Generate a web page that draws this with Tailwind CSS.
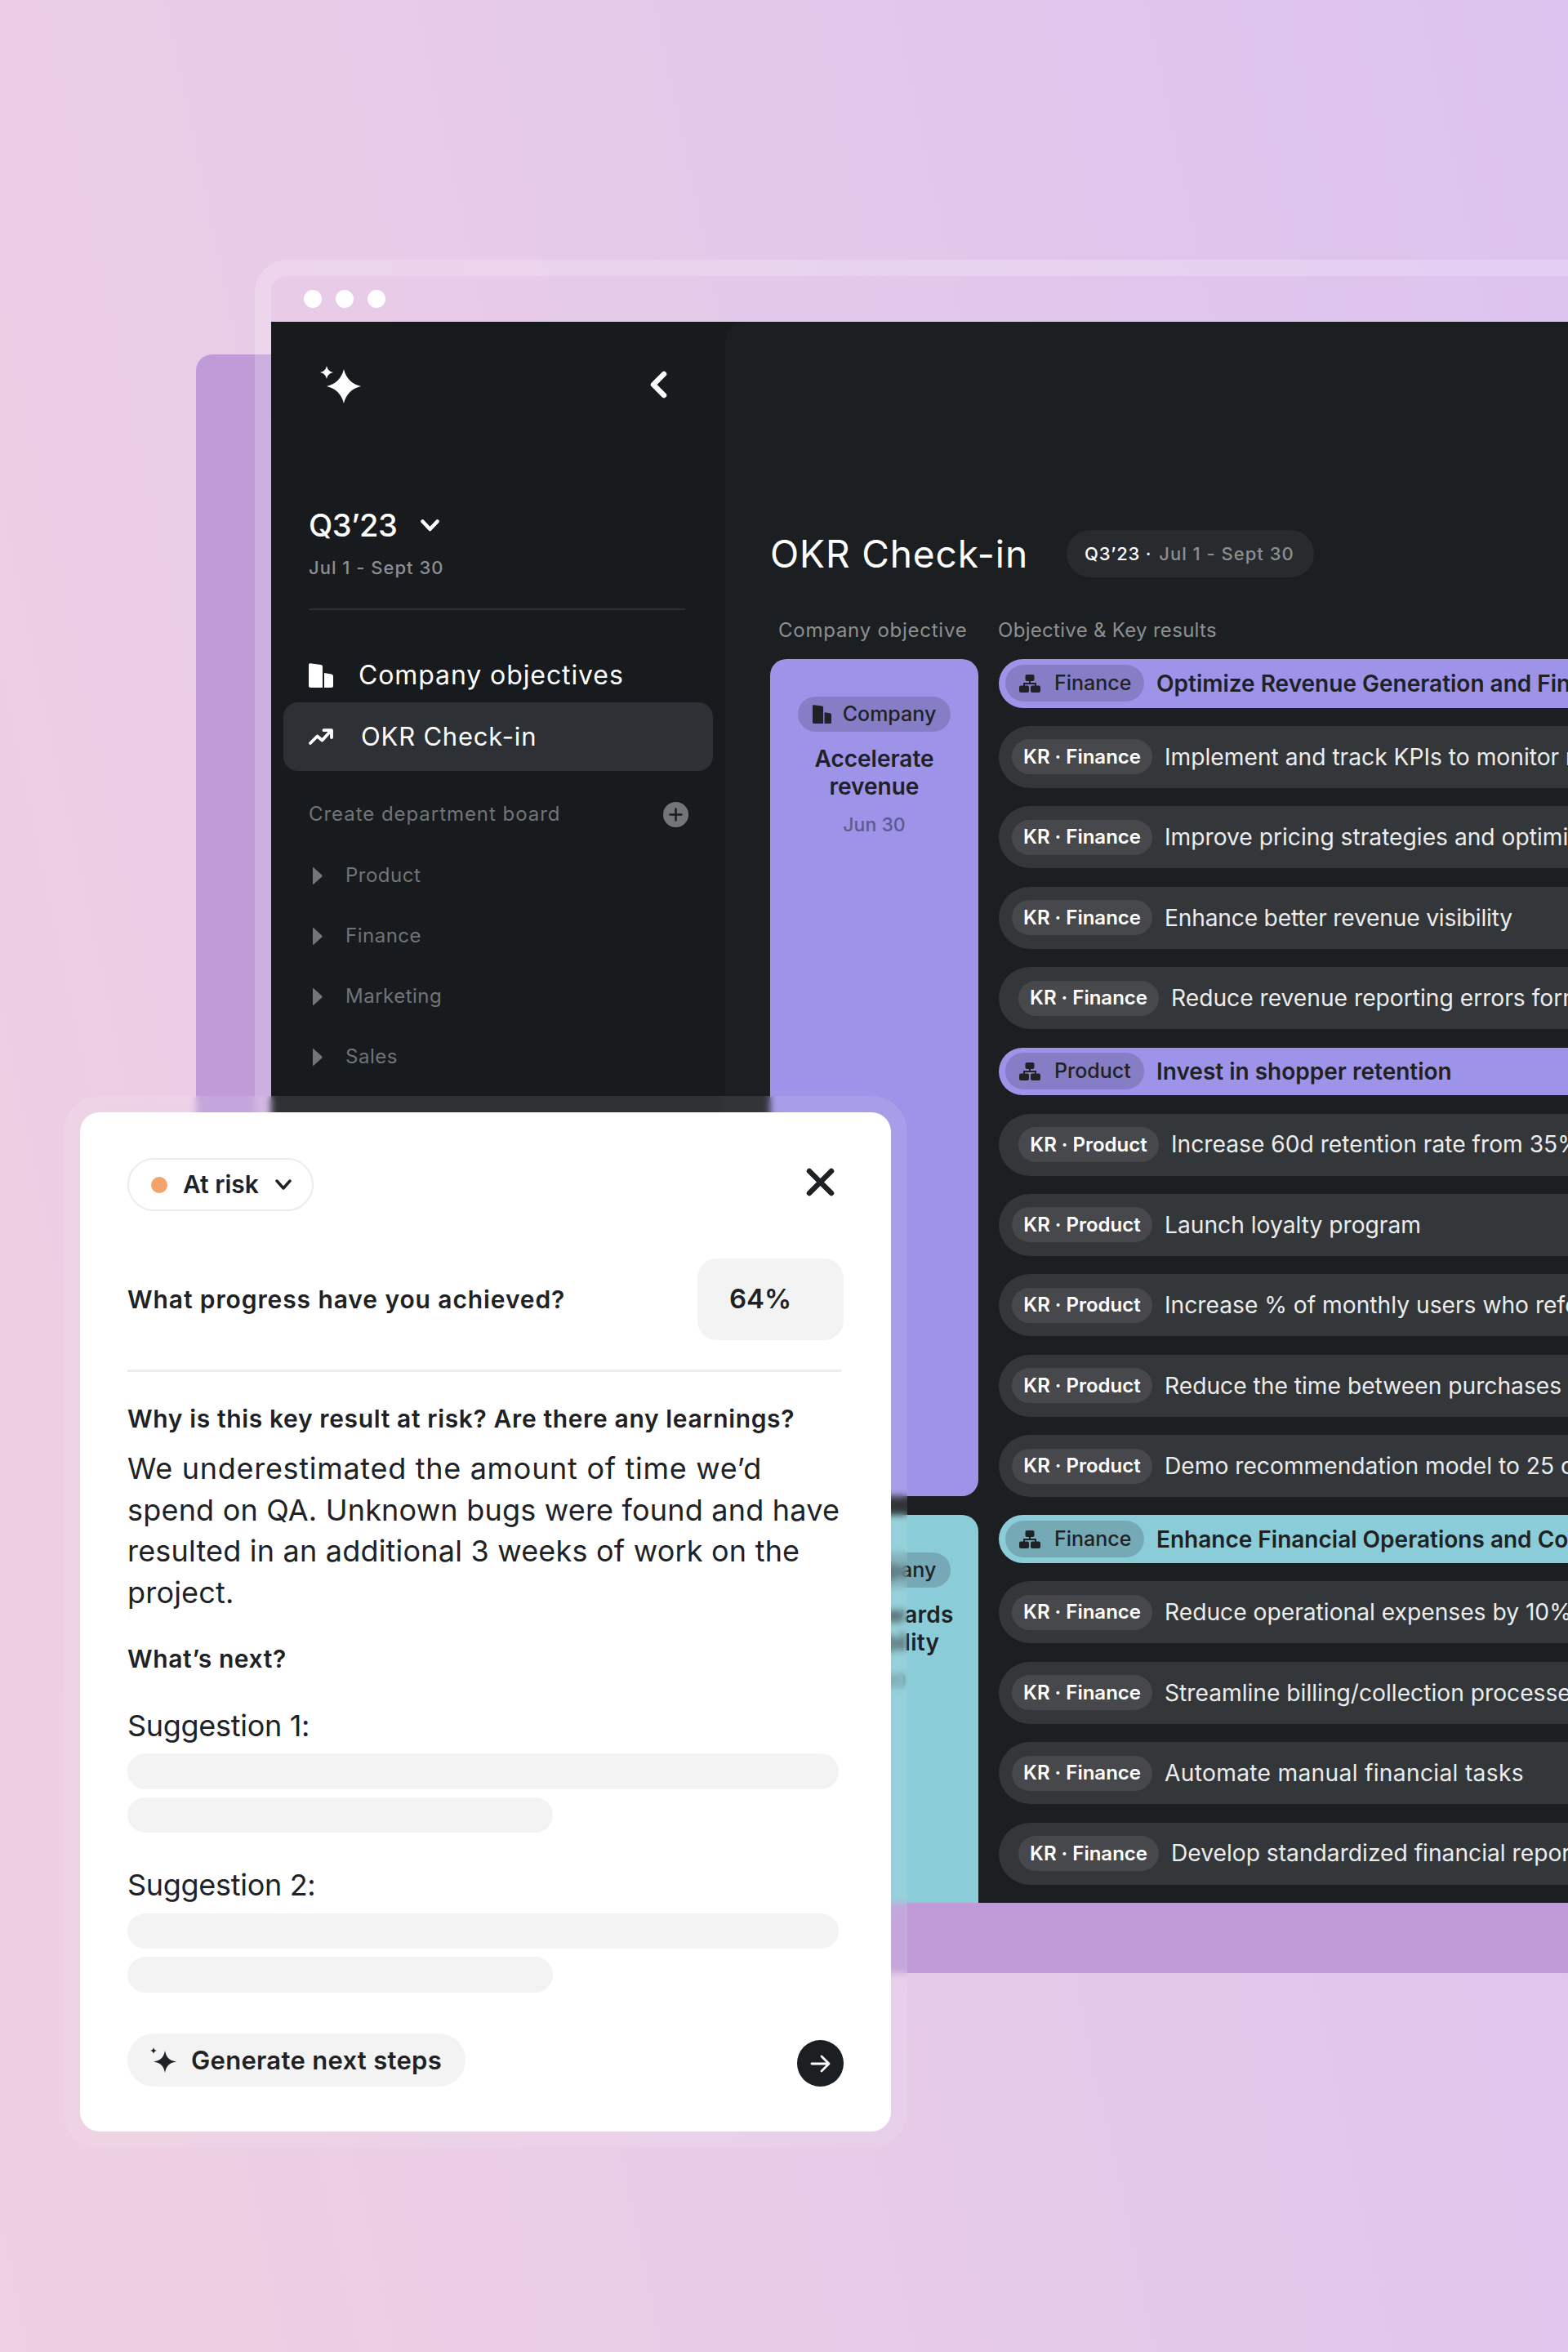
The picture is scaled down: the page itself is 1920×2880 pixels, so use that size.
<!DOCTYPE html>
<html lang="en">
<head>
    <meta charset="UTF-8">
    <title>OKR Check-in</title>
    <script src="https://cdn.jsdelivr.net/npm/@tailwindcss/browser@4"></script>
</head>
<body class="font-[family-name:Inter,sans-serif]">
<div class="relative w-[1920px] h-[2880px] overflow-hidden bg-linear-78 from-[#efd0e2] to-[#dcc3ef]">

    <!-- purple sheet behind the window -->
    <div class="absolute left-[240px] top-[434px] right-0 h-[1982px] rounded-tl-[20px] bg-[#bf9cd8]"></div>

    <!-- browser window -->
    <div class="absolute left-[312px] top-[318px] right-0 h-[2012px] flex flex-col overflow-hidden rounded-tl-[40px] border-l-[20px] border-t-[20px] border-white/20">
        <div class="h-[56px] shrink-0 flex items-center gap-[17px] pl-[40px]">
            <span class="w-[22px] h-[22px] rounded-full bg-white"></span>
            <span class="w-[22px] h-[22px] rounded-full bg-white"></span>
            <span class="w-[22px] h-[22px] rounded-full bg-white"></span>
        </div>

        <div class="flex-1 flex min-h-0 bg-[#171b1e]">
            <!-- sidebar -->
            <aside class="w-[556px] shrink-0 flex flex-col pl-[46px] pr-[49px]">
                <div class="mt-[54px] h-[46px] flex items-center justify-between">
                    <svg class="ml-[14px]" width="50" height="46" viewBox="0 0 50 46" fill="#fff">
                        <path d="M29 4C31.5 15 39 22.5 50 25C39 27.5 31.5 35 29 46C26.500 35 19 27.500 8 25C19 22.5 26.500 15 29 4Z"/>
                        <path d="M8 0C9 4.500 11.500 7 16 8C11.500 9 9 11.500 8 16C7 11.500 4.500 9 0 8C4.500 7 7 4.500 8 0Z"/>
                    </svg>
                    <svg class="mr-[22px]" width="22" height="34" viewBox="0 0 22 34" fill="none" stroke="#fff" stroke-width="6.500" stroke-linecap="round" stroke-linejoin="round"><path d="M18 4L5 17L18 30"/></svg>
                </div>

                <div class="mt-[127px] h-[44px] flex items-center">
                    <span class="text-[38px] font-medium text-white tracking-[-0.5px]">Q3’23</span>
                    <svg class="ml-[29px]" width="23" height="15" viewBox="0 0 23 15" fill="none" stroke="#fff" stroke-width="4.500" stroke-linecap="round" stroke-linejoin="round"><path d="M2.500 2.500L11.500 12L20.500 2.500"/></svg>
                </div>
                <div class="mt-[15px] h-[30px] flex items-center text-[22px] font-medium tracking-[1px] text-[#8c8f91]">Jul 1 - Sept 30</div>
                <div class="mt-[35px] h-[2px] bg-[#2c3033]"></div>

                <div class="mt-[60px] h-[40px] flex items-center gap-[31px] text-[32px] tracking-[0.9px] text-white">
                    <svg width="30" height="30" viewBox="0 0 30 30" fill="#fff" class="shrink-0">
                        <path d="M0 2Q0 0 2 .2L15 2Q17 2.300 17 4V30H2Q0 30 0 28Z"/>
                        <path d="M19 12L28 13.500Q30 14 30 16V28Q30 30 28 30H19Z"/>
                    </svg>
                    <span>Company objectives</span>
                </div>

                <div class="mt-[13px] -ml-[31px] w-[526px] h-[84px] flex items-center gap-[34px] pl-[31px] rounded-[18px] bg-[#2d3135] text-[31px] tracking-[0.8px] text-white">
                    <svg width="30" height="20" viewBox="0 0 30 20" fill="none" stroke="#fff" stroke-width="3.800" stroke-linecap="round" stroke-linejoin="round" class="shrink-0">
                        <path d="M2 18L10.500 9.500L16.500 14.500L27 3"/><path d="M18.500 2.200H28V11"/>
                    </svg>
                    <span>OKR Check-in</span>
                </div>

                <div class="mt-[37px] -mr-[4px] h-[32px] flex items-center justify-between text-[24px] tracking-[0.95px] text-[#717477]">
                    <span>Create department board</span>
                    <span class="w-[31px] h-[31px] rounded-full bg-[#737678] flex items-center justify-center">
                        <svg width="17" height="17" viewBox="0 0 17 17" fill="none" stroke="#171b1e" stroke-width="2.400" stroke-linecap="round"><path d="M8.500 1.500V15.500M1.500 8.500H15.500"/></svg>
                    </span>
                </div>

                <div class="mt-[44px] flex flex-col gap-[44px] text-[24px] tracking-[0.5px] text-[#717477]">
                    <div class="h-[30px] flex items-center gap-[28px] pl-[4px]">
                        <svg width="13" height="23" viewBox="0 0 13 23" fill="#737678"><path d="M1 1.500Q1 .5 2 1.200L12.200 10.500Q13 11.500 12.200 12.500L2 21.800Q1 22.500 1 21.500Z"/></svg>
                        <span>Product</span>
                    </div>
                    <div class="h-[30px] flex items-center gap-[28px] pl-[4px]">
                        <svg width="13" height="23" viewBox="0 0 13 23" fill="#737678"><path d="M1 1.500Q1 .5 2 1.200L12.200 10.500Q13 11.500 12.200 12.500L2 21.800Q1 22.500 1 21.500Z"/></svg>
                        <span>Finance</span>
                    </div>
                    <div class="h-[30px] flex items-center gap-[28px] pl-[4px]">
                        <svg width="13" height="23" viewBox="0 0 13 23" fill="#737678"><path d="M1 1.500Q1 .5 2 1.200L12.200 10.500Q13 11.500 12.200 12.500L2 21.800Q1 22.500 1 21.500Z"/></svg>
                        <span>Marketing</span>
                    </div>
                    <div class="h-[30px] flex items-center gap-[28px] pl-[4px]">
                        <svg width="13" height="23" viewBox="0 0 13 23" fill="#737678"><path d="M1 1.500Q1 .5 2 1.200L12.200 10.500Q13 11.500 12.200 12.500L2 21.800Q1 22.500 1 21.500Z"/></svg>
                        <span>Sales</span>
                    </div>
                </div>
            </aside>

            <!-- main -->
            <main class="flex-1 min-w-0 overflow-hidden rounded-tl-[24px] bg-[#1b1f22] pl-[55px]">
                <div class="mt-[255px] h-[58px] flex items-center gap-[47px]">
                    <h1 class="text-[46px] font-normal tracking-[0.9px] text-white whitespace-nowrap">OKR Check-in</h1>
                    <div class="h-[58px] w-[303px] flex items-center pl-[22px] rounded-full bg-[#272b2e] text-[22px] font-medium whitespace-nowrap">
                        <span class="tracking-[0.8px] text-white">Q3’23 ·</span><span class="ml-[9px] tracking-[1px] text-[#8c8f91]">Jul 1 - Sept 30</span>
                    </div>
                </div>

                <div class="mt-[50px] h-[30px] flex items-center text-[24px] text-[#8d9091] whitespace-nowrap">
                    <span class="ml-[10px] w-[269px] tracking-[0.75px]">Company objective</span>
                    <span class="tracking-[0.3px]">Objective &amp; Key results</span>
                </div>

                <div class="mt-[20px] flex gap-[25px]">
                    <!-- company objective column -->
                    <div class="w-[255px] shrink-0 flex flex-col gap-[23px]">
                        <div class="h-[1025px] flex flex-col items-center rounded-[20px] bg-[#9d93e8] pt-[46px] text-[#1e2224]">
                            <div class="w-[187px] h-[43px] flex items-center justify-center gap-[14px] rounded-full bg-[#857dc5] text-[25px] font-medium">
                                <svg width="23" height="23" viewBox="0 0 30 30" fill="#1e2224" class="shrink-0">
                                    <path d="M0 2Q0 0 2 .2L15 2Q17 2.300 17 4V30H2Q0 30 0 28Z"/><path d="M19 12L28 13.500Q30 14 30 16V28Q30 30 28 30H19Z"/>
                                </svg>
                                <span>Company</span>
                            </div>
                            <div class="mt-[16px] text-center text-[28px] leading-[34px] font-semibold">Accelerate<br>revenue</div>
                            <div class="mt-[13px] text-[23px] font-medium text-[#5d5a8f]">Jun 30</div>
                        </div>
                        <div class="h-[475px] flex flex-col items-center rounded-t-[20px] bg-[#8accd7] pt-[46px] text-[#1e2224]">
                            <div class="w-[187px] h-[43px] flex items-center justify-center gap-[14px] rounded-full bg-[#74a9b5] text-[25px] font-medium">
                                <svg width="23" height="23" viewBox="0 0 30 30" fill="#1e2224" class="shrink-0">
                                    <path d="M0 2Q0 0 2 .2L15 2Q17 2.300 17 4V30H2Q0 30 0 28Z"/><path d="M19 12L28 13.500Q30 14 30 16V28Q30 30 28 30H19Z"/>
                                </svg>
                                <span>Company</span>
                            </div>
                            <div class="mt-[16px] text-center text-[28px] leading-[34px] font-semibold tracking-[0.3px]">Move towards<br>profitability</div>
                            <div class="mt-[13px] text-[23px] font-medium text-[#4e7480]">Sep 30</div>
                        </div>
                    </div>

                    <!-- objective and key result rows -->
                    <div class="flex-1 min-w-0 flex flex-col gap-[22.4px] whitespace-nowrap">
                        <div class="h-[59.6px] shrink-0 flex items-center gap-[15px] pl-[8px] rounded-l-full bg-[#9d93e8] text-[#1e2224]">
                            <div class="w-[170px] h-[45px] shrink-0 flex items-center gap-[17px] pl-[17px] rounded-full bg-[#857dc5] text-[25px] font-medium">
                                <svg width="26" height="22" viewBox="0 0 26 22" fill="#1e2224" class="shrink-0"><rect x="7.500" width="11" height="8" rx="2"/><rect y="13.500" width="12" height="8.500" rx="2"/><rect x="14" y="13.500" width="12" height="8.500" rx="2"/><path d="M13 7v4M6 15v-4h14v4" fill="none" stroke="#1e2224" stroke-width="2"/></svg>
                                <span>Finance</span>
                            </div>
                            <span class="text-[28px] font-semibold">Optimize Revenue Generation and Financial Performance</span>
                        </div>

                        <div class="h-[76px] shrink-0 flex items-center gap-[15px] pl-[16px] rounded-l-full bg-[#33373a] text-[28.2px] text-[#ececec]"><span class="w-[172px] h-[43px] shrink-0 flex items-center justify-center rounded-full bg-[#46484c] text-[24px] font-semibold text-white">KR · Finance</span><span>Implement and track KPIs to monitor revenue performance</span></div>
                        <div class="h-[76px] shrink-0 flex items-center gap-[15px] pl-[16px] rounded-l-full bg-[#33373a] text-[28.2px] text-[#ececec]"><span class="w-[172px] h-[43px] shrink-0 flex items-center justify-center rounded-full bg-[#46484c] text-[24px] font-semibold text-white">KR · Finance</span><span>Improve pricing strategies and optimize revenue streams</span></div>
                        <div class="h-[76px] shrink-0 flex items-center gap-[15px] pl-[16px] rounded-l-full bg-[#33373a] text-[28.2px] text-[#ececec]"><span class="w-[172px] h-[43px] shrink-0 flex items-center justify-center rounded-full bg-[#46484c] text-[24px] font-semibold text-white">KR · Finance</span><span class="tracking-[-0.2px]">Enhance better revenue visibility</span></div>
                        <div class="h-[76px] shrink-0 flex items-center gap-[15px] pl-[24px] rounded-l-full bg-[#33373a] text-[28.2px] text-[#ececec]"><span class="w-[172px] h-[43px] shrink-0 flex items-center justify-center rounded-full bg-[#46484c] text-[24px] font-semibold text-white">KR · Finance</span><span>Reduce revenue reporting errors form 5% to 1%</span></div>

                        <div class="h-[58.6px] shrink-0 flex items-center gap-[15px] pl-[8px] rounded-l-full bg-[#9d93e8] text-[#1e2224]">
                            <div class="w-[170px] h-[45px] shrink-0 flex items-center gap-[17px] pl-[17px] rounded-full bg-[#857dc5] text-[25px] font-medium">
                                <svg width="26" height="22" viewBox="0 0 26 22" fill="#1e2224" class="shrink-0"><rect x="7.500" width="11" height="8" rx="2"/><rect y="13.500" width="12" height="8.500" rx="2"/><rect x="14" y="13.500" width="12" height="8.500" rx="2"/><path d="M13 7v4M6 15v-4h14v4" fill="none" stroke="#1e2224" stroke-width="2"/></svg>
                                <span>Product</span>
                            </div>
                            <span class="text-[28px] font-semibold">Invest in shopper retention</span>
                        </div>

                        <div class="h-[76px] shrink-0 flex items-center gap-[15px] pl-[24px] rounded-l-full bg-[#33373a] text-[28.2px] text-[#ececec]"><span class="w-[172px] h-[43px] shrink-0 flex items-center justify-center rounded-full bg-[#46484c] text-[24px] font-semibold text-white">KR · Product</span><span>Increase 60d retention rate from 35% to 50%</span></div>
                        <div class="h-[76px] shrink-0 flex items-center gap-[15px] pl-[16px] rounded-l-full bg-[#33373a] text-[28.2px] text-[#ececec]"><span class="w-[172px] h-[43px] shrink-0 flex items-center justify-center rounded-full bg-[#46484c] text-[24px] font-semibold text-white">KR · Product</span><span>Launch loyalty program</span></div>
                        <div class="h-[76px] shrink-0 flex items-center gap-[15px] pl-[16px] rounded-l-full bg-[#33373a] text-[28.2px] text-[#ececec]"><span class="w-[172px] h-[43px] shrink-0 flex items-center justify-center rounded-full bg-[#46484c] text-[24px] font-semibold text-white">KR · Product</span><span>Increase % of monthly users who refer a friend</span></div>
                        <div class="h-[76px] shrink-0 flex items-center gap-[15px] pl-[16px] rounded-l-full bg-[#33373a] text-[28.2px] text-[#ececec]"><span class="w-[172px] h-[43px] shrink-0 flex items-center justify-center rounded-full bg-[#46484c] text-[24px] font-semibold text-white">KR · Product</span><span>Reduce the time between purchases by 10%</span></div>
                        <div class="h-[76px] shrink-0 flex items-center gap-[15px] pl-[16px] rounded-l-full bg-[#33373a] text-[28.2px] text-[#ececec]"><span class="w-[172px] h-[43px] shrink-0 flex items-center justify-center rounded-full bg-[#46484c] text-[24px] font-semibold text-white">KR · Product</span><span>Demo recommendation model to 25 customers</span></div>

                        <div class="h-[58.6px] shrink-0 flex items-center gap-[15px] pl-[8px] rounded-l-full bg-[#8accd7] text-[#1e2224]">
                            <div class="w-[170px] h-[45px] shrink-0 flex items-center gap-[17px] pl-[17px] rounded-full bg-[#74a9b5] text-[25px] font-medium">
                                <svg width="26" height="22" viewBox="0 0 26 22" fill="#1e2224" class="shrink-0"><rect x="7.500" width="11" height="8" rx="2"/><rect y="13.500" width="12" height="8.500" rx="2"/><rect x="14" y="13.500" width="12" height="8.500" rx="2"/><path d="M13 7v4M6 15v-4h14v4" fill="none" stroke="#1e2224" stroke-width="2"/></svg>
                                <span>Finance</span>
                            </div>
                            <span class="text-[28px] font-semibold">Enhance Financial Operations and Compliance</span>
                        </div>

                        <div class="h-[76px] shrink-0 flex items-center gap-[15px] pl-[16px] rounded-l-full bg-[#33373a] text-[28.2px] text-[#ececec]"><span class="w-[172px] h-[43px] shrink-0 flex items-center justify-center rounded-full bg-[#46484c] text-[24px] font-semibold text-white">KR · Finance</span><span>Reduce operational expenses by 10%</span></div>
                        <div class="h-[76px] shrink-0 flex items-center gap-[15px] pl-[16px] rounded-l-full bg-[#33373a] text-[28.2px] text-[#ececec]"><span class="w-[172px] h-[43px] shrink-0 flex items-center justify-center rounded-full bg-[#46484c] text-[24px] font-semibold text-white">KR · Finance</span><span>Streamline billing/collection processes</span></div>
                        <div class="h-[76px] shrink-0 flex items-center gap-[15px] pl-[16px] rounded-l-full bg-[#33373a] text-[28.2px] text-[#ececec]"><span class="w-[172px] h-[43px] shrink-0 flex items-center justify-center rounded-full bg-[#46484c] text-[24px] font-semibold text-white">KR · Finance</span><span class="tracking-[0.3px]">Automate manual financial tasks</span></div>
                        <div class="h-[76px] shrink-0 flex items-center gap-[15px] pl-[24px] rounded-l-full bg-[#33373a] text-[28.2px] text-[#ececec]"><span class="w-[172px] h-[43px] shrink-0 flex items-center justify-center rounded-full bg-[#46484c] text-[24px] font-semibold text-white">KR · Finance</span><span>Develop standardized financial reporting</span></div>
                    </div>
                </div>
            </main>
        </div>
    </div>

    <!-- check-in dialog over the window -->
    <div class="absolute left-[78px] top-[1342px] w-[1033px] h-[1288px] p-[20px] rounded-[44px] bg-white/10 backdrop-blur-[4px]">
        <div class="h-full rounded-[24px] bg-white px-[58px] text-[#1e2224]">
            <div class="pt-[56px] flex items-start justify-between">
                <div class="w-[228px] h-[65px] flex items-center pl-[27px] rounded-full border-2 border-[#ececec] bg-white">
                    <span class="w-[20px] h-[20px] rounded-full bg-[#f4a36c]"></span>
                    <span class="ml-[19px] text-[30px] font-semibold">At risk</span>
                    <svg class="ml-[20px]" width="20" height="13" viewBox="0 0 20 13" fill="none" stroke="#1e2224" stroke-width="3.400" stroke-linecap="round" stroke-linejoin="round"><path d="M2 2L10 11L18 2"/></svg>
                </div>
                <svg class="mt-[12px] mr-[11px]" width="35" height="35" viewBox="0 0 35 35" fill="none" stroke="#1e2224" stroke-width="6.500" stroke-linecap="round"><path d="M4 4L31 31M31 4L4 31"/></svg>
            </div>

            <div class="mt-[58px] h-[100px] flex items-center justify-between">
                <span class="text-[30px] font-semibold tracking-[0.9px]">What progress have you achieved?</span>
                <div class="w-[179px] h-[100px] flex items-center pl-[39px] rounded-[24px] bg-[#f3f3f3] text-[33px] font-semibold">64%</div>
            </div>

            <div class="mt-[36px] w-[874px] h-[3px] bg-[#ececec]"></div>

            <div class="mt-[37px] h-[40px] flex items-center text-[30px] font-semibold tracking-[0.63px]">Why is this key result at risk? Are there any learnings?</div>
            <p class="mt-[16px] w-[890px] text-[36px] leading-[50.6px] tracking-[0.2px]"><span class="tracking-[0.7px]">We underestimated the amount of time we’d</span><br>spend on QA. Unknown bugs were found and have<br>resulted in an additional 3 weeks of work on the<br>project.</p>

            <div class="mt-[36.5px] h-[40px] flex items-center text-[30px] font-semibold tracking-[0.6px]">What’s next?</div>

            <div class="mt-[36px] h-[50px] flex items-center text-[36px] tracking-[-0.3px]">Suggestion 1:</div>
            <div class="mt-[9.5px] w-[871px] h-[43.5px] rounded-full bg-[#f3f3f3]"></div>
            <div class="mt-[10px] w-[520.5px] h-[43.5px] rounded-full bg-[#f3f3f3]"></div>

            <div class="mt-[39px] h-[50px] flex items-center text-[36px] tracking-[-0.3px]">Suggestion 2:</div>
            <div class="mt-[9.5px] w-[871px] h-[43.5px] rounded-full bg-[#f3f3f3]"></div>
            <div class="mt-[10px] w-[520.5px] h-[43.5px] rounded-full bg-[#f3f3f3]"></div>

            <div class="mt-[50.5px] flex items-end justify-between">
                <div class="w-[414px] h-[65px] flex items-center gap-[18px] pl-[28px] rounded-full bg-[#f3f3f3] text-[31px] font-semibold tracking-[0.3px]">
                    <svg width="32" height="31" viewBox="0 0 32 31" fill="#1e2224" class="shrink-0">
                        <path d="M18 4C19.500 12 23 16 32 17.500C23 19 19.500 23 18 31C16.500 23 13 19 4 17.500C13 16 16.500 12 18 4Z"/>
                        <path d="M4 0C4.500 2.500 5.500 3.500 8 4C5.500 4.500 4.500 5.500 4 8C3.500 5.500 2.500 4.500 0 4C2.500 3.500 3.500 2.500 4 0Z"/>
                    </svg>
                    <span>Generate next steps</span>
                </div>
                <div class="w-[57px] h-[57px] rounded-full bg-[#1b1f22] flex items-center justify-center">
                    <svg width="25" height="22" viewBox="0 0 25 22" fill="none" stroke="#fff" stroke-width="2.800" stroke-linecap="round" stroke-linejoin="round"><path d="M2 11H23M14 2L23 11L14 20"/></svg>
                </div>
            </div>
        </div>
    </div>
</div>
</body>
</html>
